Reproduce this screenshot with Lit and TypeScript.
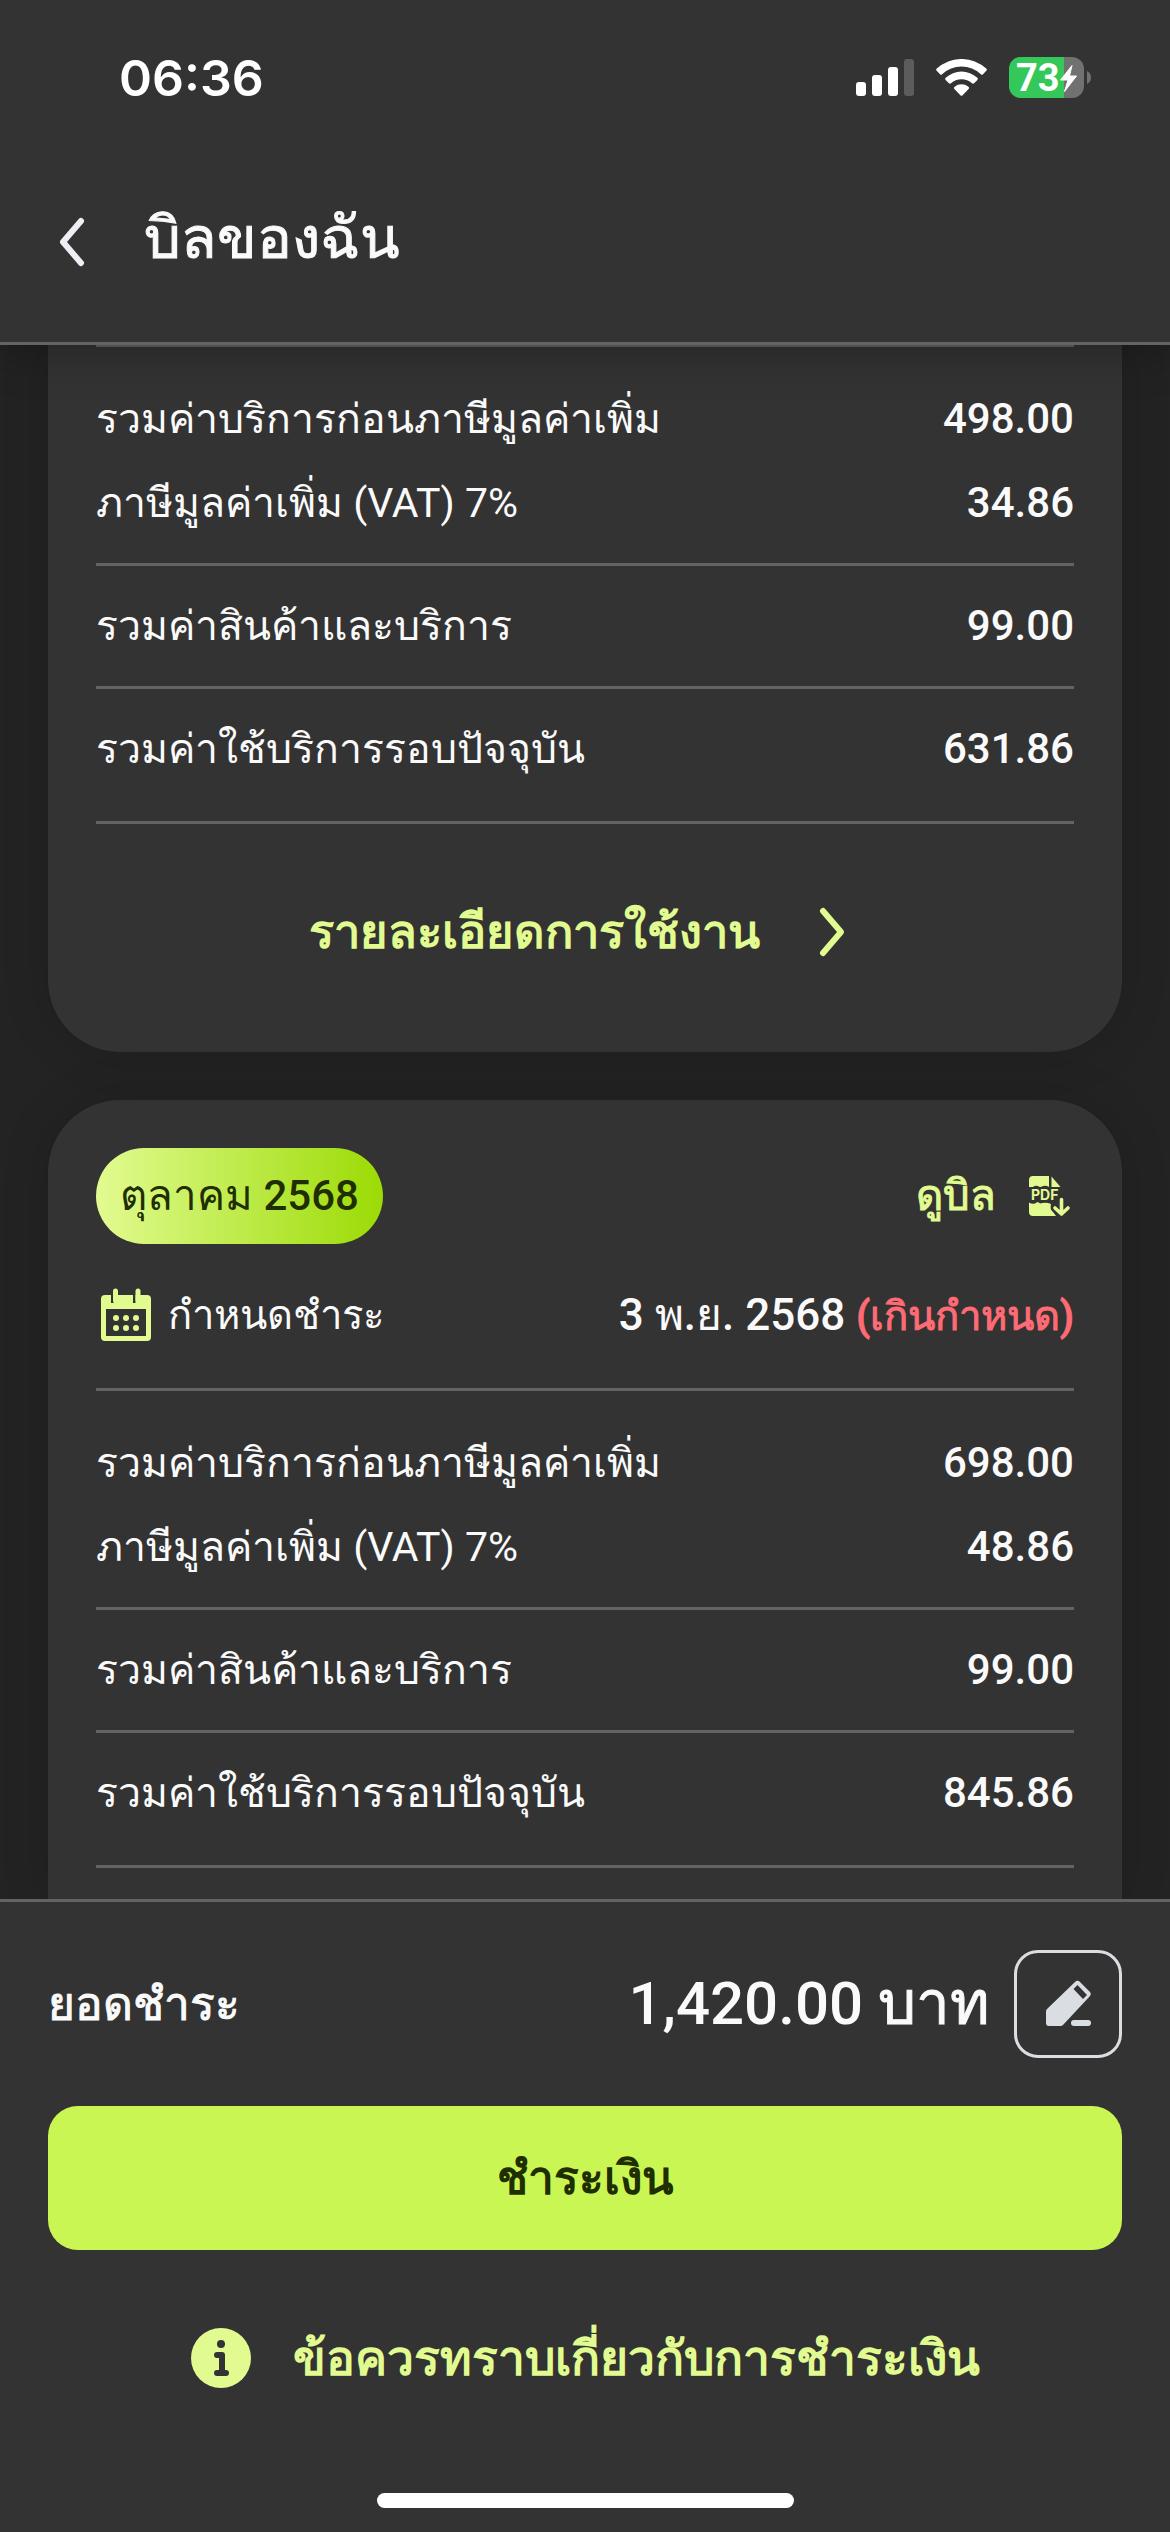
import { LitElement, html, svg, css } from "lit";
import { customElement, property } from "lit/decorators.js";

interface Charge {
  label: string;
  amount: string;
}

interface Bill {
  month?: string;
  due?: string;
  status?: string;
  groups: Charge[][];
  detailsLink: boolean;
}

const bills: Bill[] = [
  {
    groups: [
      [
        { label: "รวมค่าบริการก่อนภาษีมูลค่าเพิ่ม", amount: "498.00" },
        { label: "ภาษีมูลค่าเพิ่ม (VAT) 7%", amount: "34.86" },
      ],
      [{ label: "รวมค่าสินค้าและบริการ", amount: "99.00" }],
      [{ label: "รวมค่าใช้บริการรอบปัจจุบัน", amount: "631.86" }],
    ],
    detailsLink: true,
  },
  {
    month: "ตุลาคม 2568",
    due: "3 พ.ย. 2568",
    status: "(เกินกำหนด)",
    groups: [
      [
        { label: "รวมค่าบริการก่อนภาษีมูลค่าเพิ่ม", amount: "698.00" },
        { label: "ภาษีมูลค่าเพิ่ม (VAT) 7%", amount: "48.86" },
      ],
      [{ label: "รวมค่าสินค้าและบริการ", amount: "99.00" }],
      [{ label: "รวมค่าใช้บริการรอบปัจจุบัน", amount: "845.86" }],
    ],
    detailsLink: false,
  },
];

const chevron = (d: string) => html`
  <svg class="icon" viewBox="0 0 60 60" aria-hidden="true">
    <path d=${d} fill="none" stroke="currentColor" stroke-width="6" stroke-linecap="round" stroke-linejoin="round" />
  </svg>
`;

const calendarIcon = html`
  <svg class="icon" viewBox="0 0 60 60" aria-hidden="true">
    <path
      fill="currentColor"
      fill-rule="evenodd"
      d="M9 9h6v8h2.500v-8h19.500v8h2.500v-8h11.500a4 4 0 0 1 4 4v38a4 4 0 0 1-4 4H9a4 4 0 0 1-4-4V13a4 4 0 0 1 4-4zM10 23v27h40V23z"
    />
    <path d="M19.500 5v9M42 5v9" stroke="currentColor" stroke-width="5" stroke-linecap="round" />
    ${[20, 30, 40].map(
      (x) => svg`
        <circle cx=${x} cy="32" r="3" fill="currentColor" />
        <circle cx=${x} cy="42" r="3" fill="currentColor" />
      `
    )}
  </svg>
`;

const pdfIcon = html`
  <svg class="icon" viewBox="0 0 60 60" aria-hidden="true">
    <path fill="currentColor" d="M19 10h16v11q-3-2-6-1q-3 2-5 0q-3-1-5 1h-4v-7a4 4 0 0 1 4-4z" />
    <path fill="currentColor" d="M37.500 10.500l9 10.500h-9z" />
    <text class="pdf-text" x="17" y="34" fill="currentColor">PDF</text>
    <path fill="currentColor" d="M15 36.500q3 2 6 1q3-2.500 5 0q4-1 8-.5l3 1q-1.500 5 2 8l3 4H19a4 4 0 0 1-4-4z" />
    <path d="M47.500 33.500v14M41 42l6.500 6l6.500-6" fill="none" stroke="currentColor" stroke-width="3.600" stroke-linecap="round" stroke-linejoin="round" />
  </svg>
`;

const editIcon = html`
  <svg class="icon" viewBox="0 0 60 60" aria-hidden="true">
    <path
      fill="currentColor"
      fill-rule="evenodd"
      d="M8 38a4 4 0 0 1 1-3L37 8a3 3 0 0 1 5 0l10 10a3 3 0 0 1 0 4L25 51a4 4 0 0 1-3 1H11a3 3 0 0 1-3-3zM39.500 11l-4 4L45 25l4-4z"
    />
    <path d="M36 49h14" stroke="currentColor" stroke-width="6" stroke-linecap="round" />
  </svg>
`;

const infoIcon = html`
  <svg class="icon" viewBox="0 0 60 60" aria-hidden="true">
    <circle cx="30" cy="30" r="30" fill="currentColor" />
    <circle class="ink" cx="30" cy="16" r="4" />
    <path class="ink-line" d="M26 27h5v18M26 45h9" />
  </svg>
`;

@customElement("status-bar")
export class StatusBar extends LitElement {
  static styles = css`
    :host {
      display: block;
      color: #fff;
      font-family: Inter, "Liberation Sans", sans-serif;
    }
    .bar {
      display: flex;
      align-items: center;
      justify-content: space-between;
      height: 141px;
      padding: 14px 78px 0 119px;
      box-sizing: border-box;
    }
    .time {
      font-size: 50px;
      line-height: 60px;
      font-weight: 600;
    }
    .indicators {
      display: flex;
      align-items: center;
      gap: 22px;
    }
    .signal { width: 58px; height: 37px; }
    .wifi { width: 51px; height: 37px; }
    .battery {
      width: 83px;
      height: 51px;
      overflow: visible;
    }
    .level { font: 700 38px Roboto, "Liberation Sans", sans-serif; }
  `;

  render() {
    return html`
      <div class="bar">
        <time class="time">06:36</time>
        <div class="indicators">
          <svg class="signal" viewBox="0 0 58 37" fill="#fff" aria-hidden="true">
            <rect x="0" y="23" width="10" height="14" rx="3" />
            <rect x="16" y="16" width="10" height="21" rx="3" />
            <rect x="32" y="8" width="10" height="29" rx="3" />
            <rect x="48" y="0" width="10" height="37" rx="3" fill="#5c5c5c" />
          </svg>
          <svg class="wifi" viewBox="0 0 51 37" fill="#fff" aria-hidden="true">
            <path d="M.7 11.8Q-.4 10.7.8 9.6A36.500 36.500 0 0 1 50.200 9.600Q51.400 10.700 50.300 11.800L47 15.200Q46 16.200 44.900 15.200A28.500 28.500 0 0 0 6.100 15.200Q5 16.200 4 15.200z" />
            <path d="M9.600 20.900Q8.500 19.800 9.700 18.700A23.500 23.500 0 0 1 41.300 18.700Q42.500 19.800 41.400 20.900L38.100 24.300Q37.100 25.200 36 24.300A15.500 15.500 0 0 0 15 24.300Q13.900 25.200 12.900 24.300z" />
            <path d="M18.400 29.900Q17.400 28.800 18.600 27.800A11 11 0 0 1 32.400 27.800Q33.600 28.800 32.600 29.900L26.600 36.200Q25.500 37.300 24.400 36.200z" />
          </svg>
          <svg class="battery" viewBox="0 -5 83 51" role="img" aria-label="73%">
            <clipPath id="cell"><rect width="75" height="41" rx="12" /></clipPath>
            <g clip-path="url(#cell)">
              <rect width="75" height="41" fill="#717171" />
              <rect width="55" height="41" fill="#34c759" />
            </g>
            <path d="M78 14q4 2 4 6.500t-4 6.500z" fill="#717171" />
            <text class="level" x="7" y="34" fill="#fff">73</text>
            <path d="M63 8.500L51.500 23h7.500l-3.500 11.500L67.500 19h-7z" fill="#fff" stroke="#fff" stroke-linejoin="round" />
          </svg>
        </div>
      </div>
    `;
  }
}

@customElement("bill-card")
export class BillCard extends LitElement {
  @property({ attribute: false }) bill!: Bill;

  static styles = css`
    :host {
      display: block;
      padding: 0 48px;
      background: #333;
      box-shadow: 0 0 48px rgba(0, 0, 0, 0.15);
      font-size: 42px;
      line-height: 60px;
    }
    :host(.upper) { border-radius: 0 0 72px 72px; }
    :host(.lower) { flex: 1 0 auto; border-radius: 72px 72px 0 0; }
    .icon { flex: none; width: 60px; height: 60px; }
    .pdf-text { font: 700 14px Inter, sans-serif; }
    .head,
    .due {
      display: flex;
      align-items: center;
      justify-content: space-between;
    }
    .charge {
      display: flex;
      align-items: baseline;
      justify-content: space-between;
      height: 60px;
    }
    .head { padding-top: 48px; }
    .month {
      padding: 18px 24px;
      border-radius: 48px;
      background: linear-gradient(to right, #e2fb91, #9bdb05);
      color: #1f2f02;
      font-weight: 500;
    }
    .view {
      display: flex;
      align-items: center;
      gap: 18px;
      color: #e2fb91;
      text-decoration: none;
    }
    .view-label,
    .overdue { -webkit-text-stroke: 1px currentColor; }
    .due {
      height: 60px;
      padding: 42px 0;
    }
    .due-label {
      display: flex;
      align-items: center;
      gap: 12px;
      font-size: 40px;
    }
    .due-label .icon { color: #e2fb91; }
    .due-date,
    .amount { font-weight: 500; }
    .due-date { font-size: 44px; }
    .overdue { color: #ff6b74; font-size: 40px; }
    .charges { margin: 0; }
    .group {
      display: flex;
      flex-direction: column;
      gap: 24px;
      padding: 30px 0;
      border-top: 3px solid #636363;
    }
    .group:first-child { padding-top: 42px; }
    .group:last-child {
      padding-bottom: 42px;
      border-bottom: 3px solid #636363;
    }
    .label { font-size: 41px; }
    .amount { margin: 0; }
    .details {
      display: flex;
      align-items: center;
      justify-content: center;
      gap: 42px;
      height: 144px;
      padding: 36px 0 48px;
      color: #e2fb91;
      font-size: 47px;
      font-weight: 700;
      text-decoration: none;
    }
  `;

  private renderHead(bill: Bill) {
    return html`
      <div class="head">
        <span class="month">${bill.month}</span>
        <a class="view" href="#bill"><span class="view-label">ดูบิล</span>${pdfIcon}</a>
      </div>
      <div class="due">
        <span class="due-label">${calendarIcon}กำหนดชำระ</span>
        <span class="due-date">${bill.due} <span class="overdue">${bill.status}</span></span>
      </div>
    `;
  }

  render() {
    const { bill } = this;
    return html`
      ${bill.month ? this.renderHead(bill) : null}
      <dl class="charges">
        ${bill.groups.map(
          (group) => html`
            <div class="group">
              ${group.map(
                (c) => html`
                  <div class="charge">
                    <dt class="label">${c.label}</dt>
                    <dd class="amount">${c.amount}</dd>
                  </div>
                `
              )}
            </div>
          `
        )}
      </dl>
      ${bill.detailsLink
        ? html`<a class="details" href="#usage">รายละเอียดการใช้งาน ${chevron("M21 9l18 21l-18 21")}</a>`
        : null}
    `;
  }
}

@customElement("app-root")
export class AppRoot extends LitElement {
  static styles = css`
    :host {
      display: flex;
      flex-direction: column;
      height: 100vh;
      background: #232323;
      color: #fafafa;
      font-family: Roboto, "Liberation Sans", sans-serif;
    }
    .icon { flex: none; width: 60px; height: 60px; }
    .header {
      position: relative;
      z-index: 1;
      flex: none;
      background: #333;
      border-bottom: 3px solid #636363;
      box-shadow: 0 6px 42px rgba(0, 0, 0, 0.3);
    }
    .title-row {
      display: flex;
      align-items: center;
      gap: 42px;
      height: 201px;
      padding: 0 42px;
    }
    .back {
      display: flex;
      padding: 0;
      border: 0;
      background: none;
      color: #eeeff4;
    }
    .title {
      margin: 0;
      padding-bottom: 8px;
      font-size: 58px;
      line-height: 84px;
      font-weight: 500;
      -webkit-text-stroke: 1px currentColor;
    }
    .bills {
      flex: 1 1 0;
      display: flex;
      flex-direction: column;
      gap: 48px;
      min-height: 0;
      margin-top: -1px;
      padding: 0 48px;
      overflow: hidden;
    }
    .footer {
      position: relative;
      flex: none;
      display: flex;
      flex-direction: column;
      align-items: stretch;
      gap: 48px;
      padding: 48px 48px 24px;
      background: #333;
      border-top: 3px solid #636363;
    }
    .total {
      display: flex;
      align-items: center;
      gap: 24px;
      font-weight: 500;
    }
    .total-label {
      flex: 1;
      font-size: 46px;
      line-height: 60px;
    }
    .total-label,
    .currency { -webkit-text-stroke: 1px currentColor; }
    .total-amount {
      font-size: 60px;
      line-height: 84px;
    }
    .edit {
      display: flex;
      align-items: center;
      justify-content: center;
      width: 108px;
      height: 108px;
      padding: 0;
      border: 3px solid #dadde2;
      border-radius: 24px;
      background: none;
      color: #dadde2;
    }
    .pay {
      height: 144px;
      border: 0;
      border-radius: 30px;
      background: #caf654;
      color: #1f2f02;
      font: 700 46px/60px Roboto, "Liberation Sans", sans-serif;
    }
    .notes {
      display: flex;
      align-items: center;
      justify-content: center;
      gap: 42px;
      height: 120px;
      color: #e2fb91;
      font-size: 48px;
      font-weight: 700;
      text-decoration: none;
    }
    .ink { fill: #333; }
    .ink-line {
      fill: none;
      stroke: #333;
      stroke-width: 6px;
      stroke-linecap: round;
      stroke-linejoin: round;
    }
    .home {
      align-self: center;
      width: 417px;
      height: 15px;
      margin-top: 27px;
      border-radius: 8px;
      background: #fff;
    }
  `;

  render() {
    return html`
      <header class="header">
        <status-bar></status-bar>
        <div class="title-row">
          <button class="back" aria-label="ย้อนกลับ">${chevron("M39 9l-18 21l18 21")}</button>
          <h1 class="title">บิลของฉัน</h1>
        </div>
      </header>
      <main class="bills">
        ${bills.map(
          (bill) => html`<bill-card class=${bill.month ? "lower" : "upper"} .bill=${bill}></bill-card>`
        )}
      </main>
      <footer class="footer">
        <div class="total">
          <span class="total-label">ยอดชำระ</span>
          <span class="total-amount">1,420.00 <span class="currency">บาท</span></span>
          <button class="edit" aria-label="แก้ไขยอดชำระ">${editIcon}</button>
        </div>
        <button class="pay">ชำระเงิน</button>
        <a class="notes" href="#notes">${infoIcon} ข้อควรทราบเกี่ยวกับการชำระเงิน</a>
        <div class="home"></div>
      </footer>
    `;
  }
}
